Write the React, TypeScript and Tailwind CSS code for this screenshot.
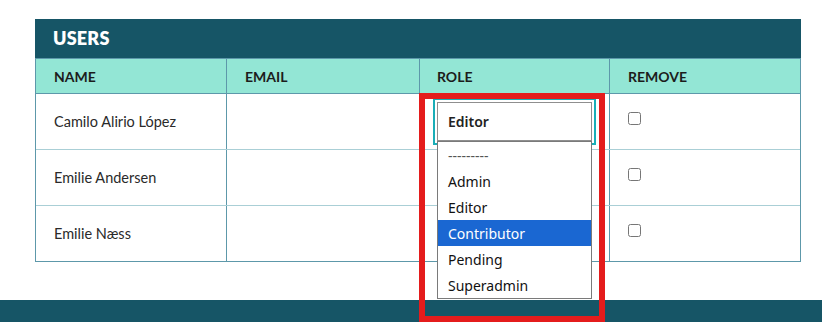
import React from "react";

const users = ["Camilo Alirio López", "Emilie Andersen", "Emilie Næss"];
const options = ["---------", "Admin", "Editor", "Contributor", "Pending", "Superadmin"];

function RoleSelect() {
  return (
    <div className="relative w-[155px] h-[39px]">
      <div className="w-full h-full border border-[#8f8f8f] outline-2 outline-offset-[2px] outline-[#19aeb8] bg-white flex items-center pl-[10px] text-[14px] font-semibold text-[#222]" style={{ fontFamily: '"Noto Sans", sans-serif' }}>
        Editor
      </div>
      <div className="absolute left-0 top-[39px] w-[155px] border border-[#7a7a7a] bg-white z-10" style={{ fontFamily: '"Noto Sans", sans-serif' }}>
        {options.map((o) => (
          <div
            key={o}
            className={
              o === "Contributor"
                ? "h-[26px] flex items-center pl-[10px] text-[14px] bg-[#1a67d2] text-white"
                : o === "---------"
                ? "h-[26px] flex items-center pl-[10px] text-[14px] text-[#555]"
                : "h-[26px] flex items-center pl-[10px] text-[14px] text-[#111]"
            }
          >
            {o}
          </div>
        ))}
      </div>
    </div>
  );
}

export default function App() {
  return (
    <div className="relative w-[822px] h-[322px] overflow-hidden bg-white" style={{ fontFamily: 'Lato, "Noto Sans", sans-serif' }}>
      <div className="ml-[35px] pt-[19px] w-[766px]">
        <div className="h-[39px] bg-[#165566] flex items-center pl-[18px] text-white text-[18px] font-extrabold tracking-[0.2px]">
          USERS
        </div>
        <div className="border border-[#5d98aa]">
          <div className="flex h-[35px] bg-[#93e6d5] border-b border-[#5d98aa] text-[14px] font-bold text-[#1c1c1c]">
            <div className="w-[190px] flex items-center pl-[18px]">NAME</div>
            <div className="w-[193px] flex items-center pl-[18px] border-l border-[#5d98aa]">EMAIL</div>
            <div className="w-[190px] flex items-center pl-[17px] border-l border-[#5d98aa]">ROLE</div>
            <div className="flex-1 flex items-center pl-[18px] border-l border-[#5d98aa]">REMOVE</div>
          </div>
          {users.map((u, i) => (
            <div key={u} className={i < 2 ? "flex h-[56px] border-b border-[#aacfd6]" : "flex h-[55px]"}>
              <div className="w-[190px] flex items-center pl-[18px] text-[14.5px] text-[#2a2a2a]">{u}</div>
              <div className="w-[193px] border-l border-[#5d98aa]"></div>
              <div className="w-[190px] border-l border-[#5d98aa] pl-[17px] flex items-center">
                {i === 0 ? <RoleSelect /> : null}
              </div>
              <div className="flex-1 border-l border-[#5d98aa] pl-[18px] pt-[18px]">
                <input type="checkbox" className="m-0 block w-[13px] h-[13px]" />
              </div>
            </div>
          ))}
        </div>
      </div>
      <div className="mt-[38px] h-[30px] bg-[#165566]"></div>
      <div className="absolute left-[419px] top-[93px] w-[186px] h-[229px] border-[6px] border-[#e41c1c] pointer-events-none z-20"></div>
    </div>
  );
}
